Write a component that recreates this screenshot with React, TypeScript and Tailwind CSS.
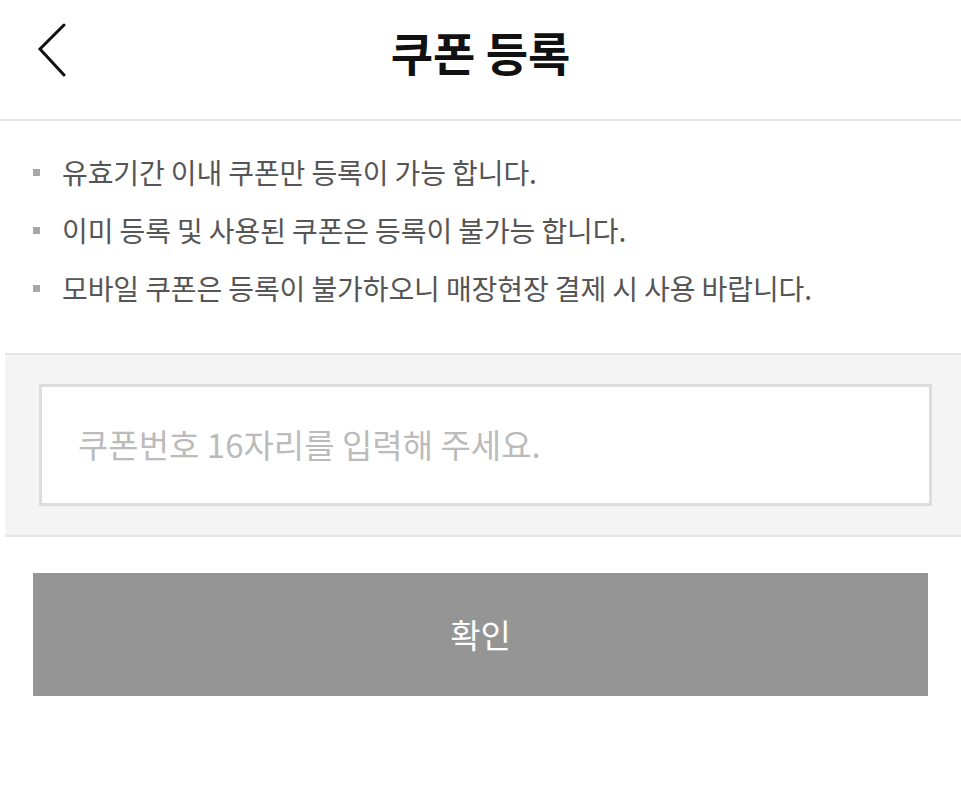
import React from "react";

const font = { fontFamily: '"Noto Sans CJK KR", "Noto Sans", sans-serif' };

export default function App() {
  const items = [
    "유효기간 이내 쿠폰만 등록이 가능 합니다.",
    "이미 등록 및 사용된 쿠폰은 등록이 불가능 합니다.",
    "모바일 쿠폰은 등록이 불가하오니 매장현장 결제 시 사용 바랍니다.",
  ];
  return (
    <div className="w-[961px] min-h-[792px] bg-white" style={font}>
      <header className="relative h-[121px] flex items-center justify-center border-b-2 border-[#e3e3e8]">
        <button className="absolute left-[35px] top-[22px] w-[34px] h-[56px] flex items-center justify-center">
          <svg width="30" height="54" viewBox="0 0 30 54" fill="none">
            <path d="M27 2 L3 26 L27 52" stroke="#111" strokeWidth="3" strokeLinecap="round" strokeLinejoin="miter" />
          </svg>
        </button>
        <h1 className="text-[46px] font-bold text-[#111] leading-none -mt-[18px]">쿠폰 등록</h1>
      </header>
      <ul className="pt-[33px] pb-[47px] pl-[33px] flex flex-col gap-[22px]">
        {items.map((t) => (
          <li key={t} className="flex items-center h-[36px]">
            <span className="w-[7px] h-[7px] bg-[#a8a8a8] mr-[22px] shrink-0" />
            <span className="text-[28px] text-[#555] leading-none tracking-[-0.1px]">{t}</span>
          </li>
        ))}
      </ul>
      <section className="border-t-2 border-b-2 border-[#e3e3e8] bg-[#f4f4f4] ml-[5px] pt-[29px] pb-[29px] pl-[34px] pr-[29px]">
        <div className="h-[122px] bg-white border-[3px] border-[#dcdcdc] flex items-center pl-[36px]">
          <input
            className="w-full outline-none text-[33px] text-[#333] placeholder:text-[#bbbbbb] bg-transparent"
            placeholder="쿠폰번호 16자리를 입력해 주세요."
            style={font}
          />
        </div>
      </section>
      <div className="pt-[36px] px-[33px]">
        <button className="w-[895px] h-[123px] bg-[#959595] text-white text-[33px] flex items-center justify-center" style={font}>
          확인
        </button>
      </div>
    </div>
  );
}
